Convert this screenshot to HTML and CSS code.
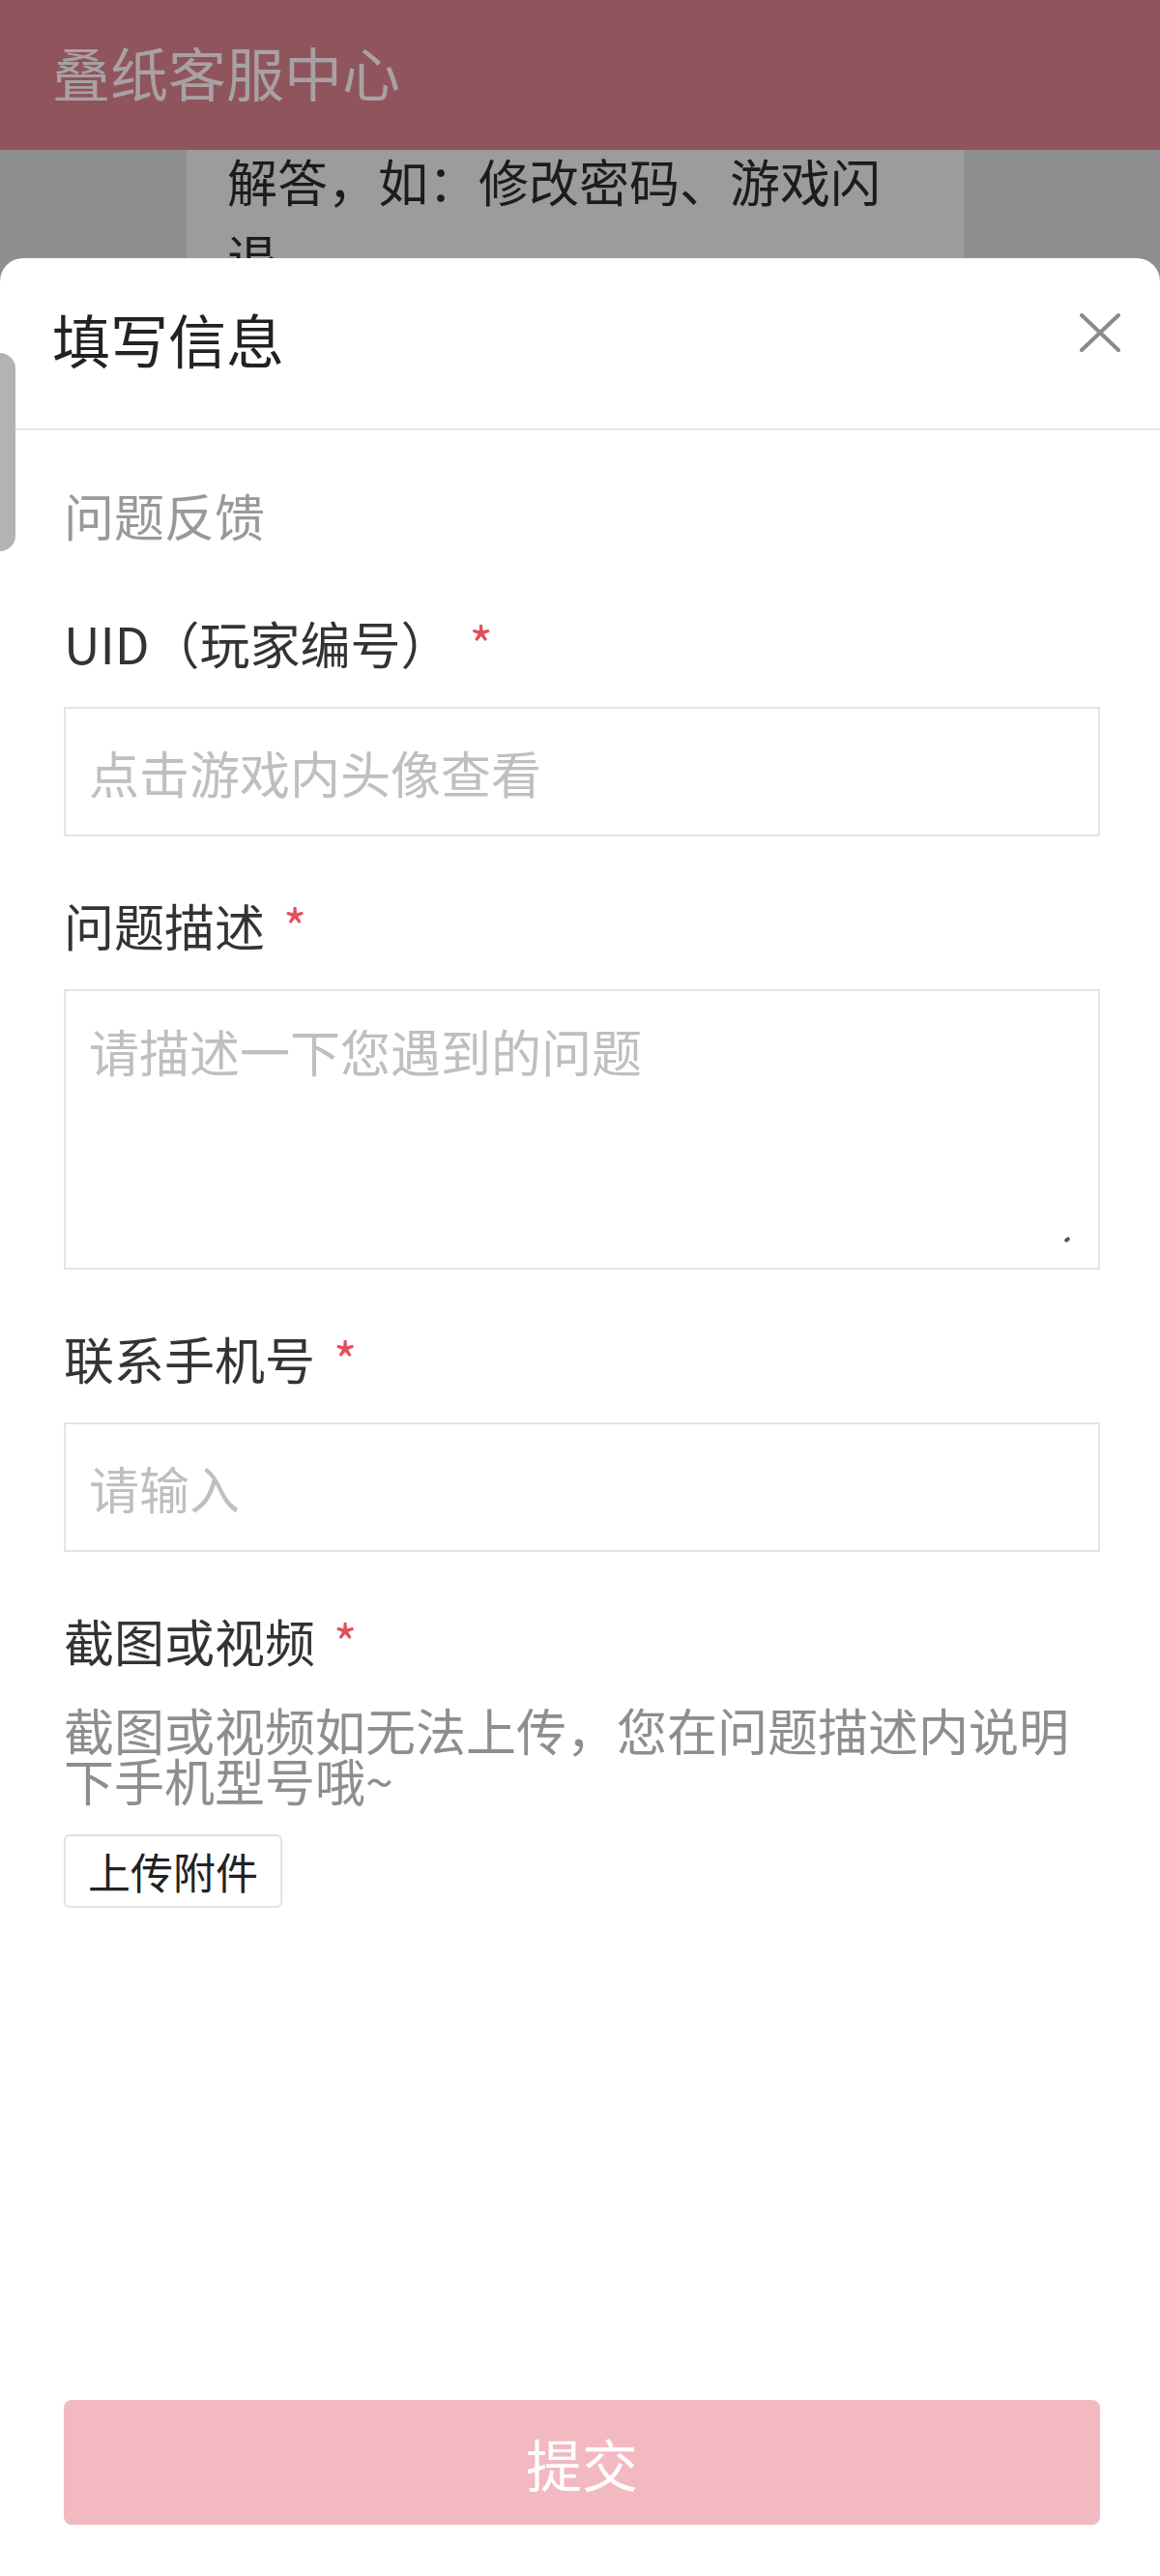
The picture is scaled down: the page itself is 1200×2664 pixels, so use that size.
FILE: index.html
```html
<!DOCTYPE html>
<html lang="zh-CN">
<head>
    <meta charset="UTF-8">
    <meta name="viewport" content="width=device-width, initial-scale=1.0">
    <title>叠纸客服中心</title>
    <link rel="stylesheet" href="styles.css">
</head>
<body>

    <div class="page">
        <header class="top-bar">叠纸客服中心</header>
        <div class="content">
            <div class="faq-card">
                <p>解答，如：修改密码、游戏闪退</p>
            </div>
        </div>
    </div>

    <div class="sheet">
        <div class="sheet-header">
            <h2>填写信息</h2>
            <button class="close-btn" type="button">
                <svg width="44" height="40" viewBox="0 0 44 40">
                    <path d="M3 2 L41 38 M41 2 L3 38" stroke="#8a8a8a" stroke-width="4" stroke-linecap="round" fill="none"/>
                </svg>
            </button>
        </div>

        <form class="sheet-body">
            <div class="section-title">问题反馈</div>

            <div class="field">
                <label>UID（玩家编号）<span class="required">*</span></label>
                <input type="text" placeholder="点击游戏内头像查看">
            </div>

            <div class="field">
                <label>问题描述<span class="required">*</span></label>
                <div class="textarea-wrap">
                    <textarea placeholder="请描述一下您遇到的问题"></textarea>
                </div>
            </div>

            <div class="field">
                <label>联系手机号<span class="required">*</span></label>
                <input type="text" placeholder="请输入">
            </div>

            <div class="field">
                <label>截图或视频<span class="required">*</span></label>
                <p class="hint">截图或视频如无法上传，您在问题描述内说明下手机型号哦~</p>
                <button class="upload-btn" type="button">上传附件</button>
            </div>
        </form>

        <div class="sheet-footer">
            <button class="submit-btn" type="button">提交</button>
        </div>
    </div>

    <div class="side-tab"></div>

</body>
</html>
```

FILE: styles.css
```css
html, body {
    margin: 0;
    height: 100%;
}
body {
    position: relative;
    width: 1200px;
    height: 2664px;
    overflow: hidden;
    font-family: "Noto Sans CJK SC", "Noto Sans", sans-serif;
    background-color: #8e8f91;
}

/* page under the mask */
.top-bar {
    position: relative;
    z-index: 1;
    height: 155px;
    box-sizing: border-box;
    padding: 44px 0 0 54px;
    font-size: 60px;
    line-height: 60px;
    color: #a9a1a4;
    background-color: #8f545c;
}
.content {
    padding: 0 203px 0 193px;
}
.faq-card {
    height: 200px;
    padding: 0 42px;
    background-color: #9c9c9c;
}
.faq-card p {
    margin: -7px 0 0;
    font-size: 52px;
    line-height: 78px;
    color: #1c1c1c;
}

/* bottom sheet */
.sheet {
    position: absolute;
    top: 267px;
    left: 0;
    right: 0;
    bottom: 0;
    display: flex;
    flex-direction: column;
    background-color: #fff;
    border-radius: 24px 24px 0 0;
}
.sheet-header {
    display: flex;
    justify-content: space-between;
    align-items: flex-start;
    height: 178px;
    box-sizing: border-box;
    padding: 48px 40px 0 54px;
    border-bottom: 2px solid #e8e8e8;
}
.sheet-header h2 {
    margin: 0;
    font-size: 60px;
    font-weight: normal;
    line-height: 70px;
    color: #222;
}
.close-btn {
    margin-top: 9px;
    padding: 0;
    border: none;
    background: none;
    line-height: 0;
}

.sheet-body {
    flex: 1;
    padding: 62px 62px 0 66px;
}
.section-title {
    font-size: 52px;
    line-height: 52px;
    color: #999;
}
.field {
    margin-top: 66px;
}
.section-title + .field {
    margin-top: 80px;
}
.field label {
    display: block;
    margin-bottom: 40px;
    font-size: 52px;
    line-height: 52px;
    color: #333;
}
.required {
    margin-left: 19px;
    color: #e2505a;
}
.field input,
.field textarea {
    display: block;
    width: 100%;
    box-sizing: border-box;
    margin: 0;
    border: 2px solid #e4e4e4;
    border-radius: 0;
    font-family: inherit;
    font-size: 52px;
    line-height: 52px;
    color: #333;
    outline: none;
}
.field input {
    height: 134px;
    padding: 0 24px;
}
.field textarea {
    height: 290px;
    padding: 36px 24px;
    resize: none;
}
.field input::placeholder,
.field textarea::placeholder {
    color: #bfbfbf;
}
.textarea-wrap {
    position: relative;
}
.textarea-wrap::after {
    content: "";
    position: absolute;
    right: 31px;
    bottom: 29px;
    width: 6px;
    height: 4px;
    border-radius: 2px;
    background-color: #555;
    transform: rotate(-35deg);
}
.hint {
    margin: 0;
    font-size: 52px;
    line-height: 52px;
    color: #8e8e8e;
}
.upload-btn {
    margin-top: 30px;
    padding: 14px 23px;
    border: 2px solid #e2e2e2;
    border-radius: 6px;
    background-color: #fff;
    font-family: inherit;
    font-size: 44px;
    line-height: 44px;
    color: #222;
}

.sheet-footer {
    padding: 0 62px 53px 66px;
}
.submit-btn {
    display: block;
    width: 100%;
    height: 129px;
    border: none;
    border-radius: 8px;
    background-color: #f3b9c1;
    font-family: inherit;
    font-size: 58px;
    color: #fff;
}

/* floating tab on the left edge */
.side-tab {
    position: absolute;
    top: 365px;
    left: 0;
    width: 16px;
    height: 205px;
    border-radius: 0 16px 16px 0;
    background-color: #b3b3b3;
}
```
